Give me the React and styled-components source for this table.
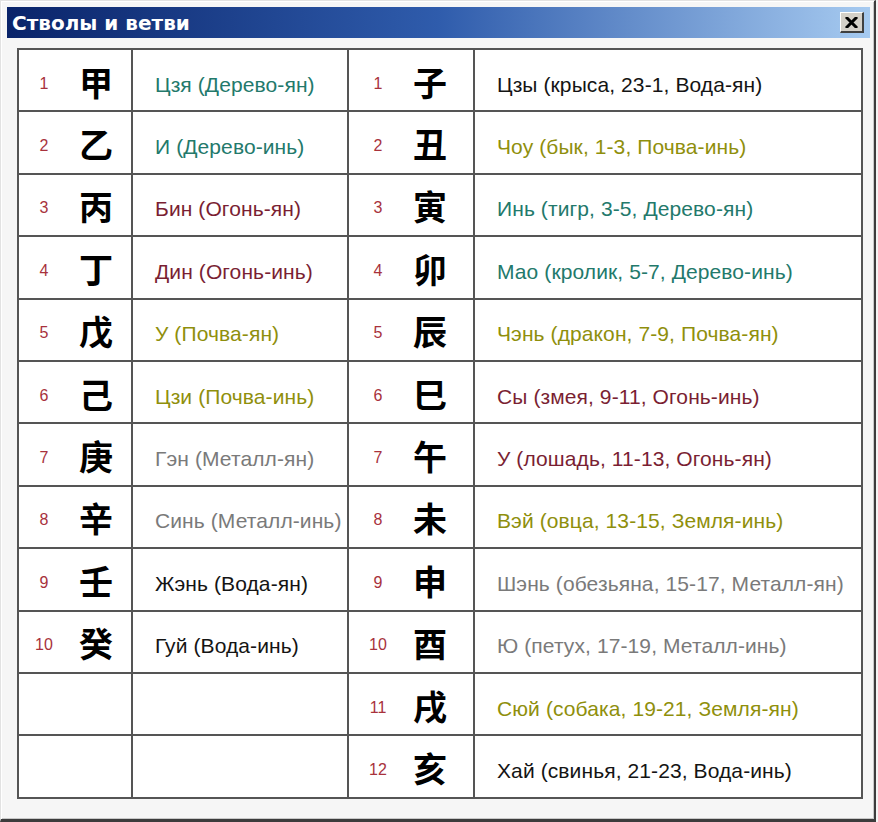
import React from "react";
import styled, { createGlobalStyle } from "styled-components";

const GlobalStyle = createGlobalStyle`
  html, body {
    margin: 0;
    padding: 0;
    background: #f4f4f4;
  }
`;

const COLORS = {
  wood: "#23796b",
  fire: "#7a1f33",
  earth: "#8f8f0c",
  metal: "#7a7a7a",
  water: "#141414",
};

const stems = [
  { n: 1, ch: "甲", text: "Цзя (Дерево-ян)", el: "wood" },
  { n: 2, ch: "乙", text: "И (Дерево-инь)", el: "wood" },
  { n: 3, ch: "丙", text: "Бин (Огонь-ян)", el: "fire" },
  { n: 4, ch: "丁", text: "Дин (Огонь-инь)", el: "fire" },
  { n: 5, ch: "戊", text: "У (Почва-ян)", el: "earth" },
  { n: 6, ch: "己", text: "Цзи (Почва-инь)", el: "earth" },
  { n: 7, ch: "庚", text: "Гэн (Металл-ян)", el: "metal" },
  { n: 8, ch: "辛", text: "Синь (Металл-инь)", el: "metal" },
  { n: 9, ch: "壬", text: "Жэнь (Вода-ян)", el: "water" },
  { n: 10, ch: "癸", text: "Гуй (Вода-инь)", el: "water" },
];

const branches = [
  { n: 1, ch: "子", text: "Цзы (крыса, 23-1, Вода-ян)", el: "water" },
  { n: 2, ch: "丑", text: "Чоу (бык, 1-3, Почва-инь)", el: "earth" },
  { n: 3, ch: "寅", text: "Инь (тигр, 3-5, Дерево-ян)", el: "wood" },
  { n: 4, ch: "卯", text: "Мао (кролик, 5-7, Дерево-инь)", el: "wood" },
  { n: 5, ch: "辰", text: "Чэнь (дракон, 7-9, Почва-ян)", el: "earth" },
  { n: 6, ch: "巳", text: "Сы (змея, 9-11, Огонь-инь)", el: "fire" },
  { n: 7, ch: "午", text: "У (лошадь, 11-13, Огонь-ян)", el: "fire" },
  { n: 8, ch: "未", text: "Вэй (овца, 13-15, Земля-инь)", el: "earth" },
  { n: 9, ch: "申", text: "Шэнь (обезьяна, 15-17, Металл-ян)", el: "metal" },
  { n: 10, ch: "酉", text: "Ю (петух, 17-19, Металл-инь)", el: "metal" },
  { n: 11, ch: "戌", text: "Сюй (собака, 19-21, Земля-ян)", el: "earth" },
  { n: 12, ch: "亥", text: "Хай (свинья, 21-23, Вода-инь)", el: "water" },
];

const Window = styled.div`
  width: 876px;
  height: 822px;
  box-sizing: border-box;
  background: #f6f6f6;
  border-style: solid;
  border-width: 1px 2px 3px 1px;
  border-color: #e2e2e2 #3c3c3c #3c3c3c #e2e2e2;
  box-shadow: inset 1px 1px 0 #ffffff, inset -1px -1px 0 #c8c8c8;
  padding: 6px 4px 0 6px;
  display: flex;
  flex-direction: column;
`;

const TitleBar = styled.div`
  height: 31px;
  display: flex;
  align-items: center;
  justify-content: space-between;
  padding: 0 6px 0 5px;
  background: linear-gradient(to right, #0a246a 0%, #2f5cac 50%, #a6caf0 100%);
`;

const Title = styled.div`
  font-family: "DejaVu Sans", "Liberation Sans", sans-serif;
  font-weight: bold;
  font-size: 20px;
  color: #ffffff;
  padding-top: 1px;
`;

const CloseButton = styled.div`
  width: 24px;
  height: 21px;
  box-sizing: border-box;
  background: #d4d0c8;
  border-style: solid;
  border-width: 1px 2px 2px 1px;
  border-color: #ffffff #404040 #404040 #ffffff;
  display: flex;
  align-items: center;
  justify-content: center;
`;

const Content = styled.div`
  padding: 10px 12px 0 10px;
`;

const Grid = styled.div`
  display: grid;
  grid-template-columns: 112px 214px 124px 386px;
  grid-auto-rows: 60.4px;
  gap: 2px;
  background: #555555;
  border: 2px solid #555555;
  width: max-content;
`;

const NumCell = styled.div`
  background: #ffffff;
  display: grid;
  grid-template-columns: ${({ $numWidth }) => $numWidth}px 1fr;
  align-items: center;
  padding-right: ${({ $pad }) => $pad}px;
  padding-top: 3px;
`;

const Num = styled.span`
  font-family: "Liberation Sans", sans-serif;
  font-size: 16px;
  color: #a8323c;
  text-align: center;
  padding-top: 4px;
`;

const Glyph = styled.span`
  font-family: "Noto Sans CJK SC", "Noto Sans CJK JP", sans-serif;
  font-weight: 700;
  font-size: 34px;
  line-height: 1;
  color: #000000;
  text-align: center;
`;

const TextCell = styled.div`
  background: #ffffff;
  display: flex;
  align-items: center;
  padding: 9px 0 0 22px;
  font-family: "Liberation Sans", sans-serif;
  font-size: 21px;
  letter-spacing: 0.1px;
  white-space: nowrap;
  color: ${({ $color }) => $color};
`;

const EmptyCell = styled.div`
  background: #ffffff;
`;

const CloseIcon = () => (
  <svg width="13" height="11" viewBox="0 0 13 11">
    <path d="M2 1 L11 10 M11 1 L2 10" stroke="#000" strokeWidth="3" strokeLinecap="square" />
  </svg>
);

export default function App() {
  return (
    <>
      <GlobalStyle />
      <Window>
        <TitleBar>
          <Title>Стволы и ветви</Title>
          <CloseButton>
            <CloseIcon />
          </CloseButton>
        </TitleBar>
        <Content>
          <Grid>
            {branches.map((b, i) => {
              const s = stems[i];
              return (
                <React.Fragment key={b.n}>
                  {s ? (
                    <NumCell $numWidth={50} $pad={8}>
                      <Num>{s.n}</Num>
                      <Glyph>{s.ch}</Glyph>
                    </NumCell>
                  ) : (
                    <EmptyCell />
                  )}
                  {s ? <TextCell $color={COLORS[s.el]}>{s.text}</TextCell> : <EmptyCell />}
                  <NumCell $numWidth={58} $pad={20}>
                    <Num>{b.n}</Num>
                    <Glyph>{b.ch}</Glyph>
                  </NumCell>
                  <TextCell $color={COLORS[b.el]}>{b.text}</TextCell>
                </React.Fragment>
              );
            })}
          </Grid>
        </Content>
      </Window>
    </>
  );
}
